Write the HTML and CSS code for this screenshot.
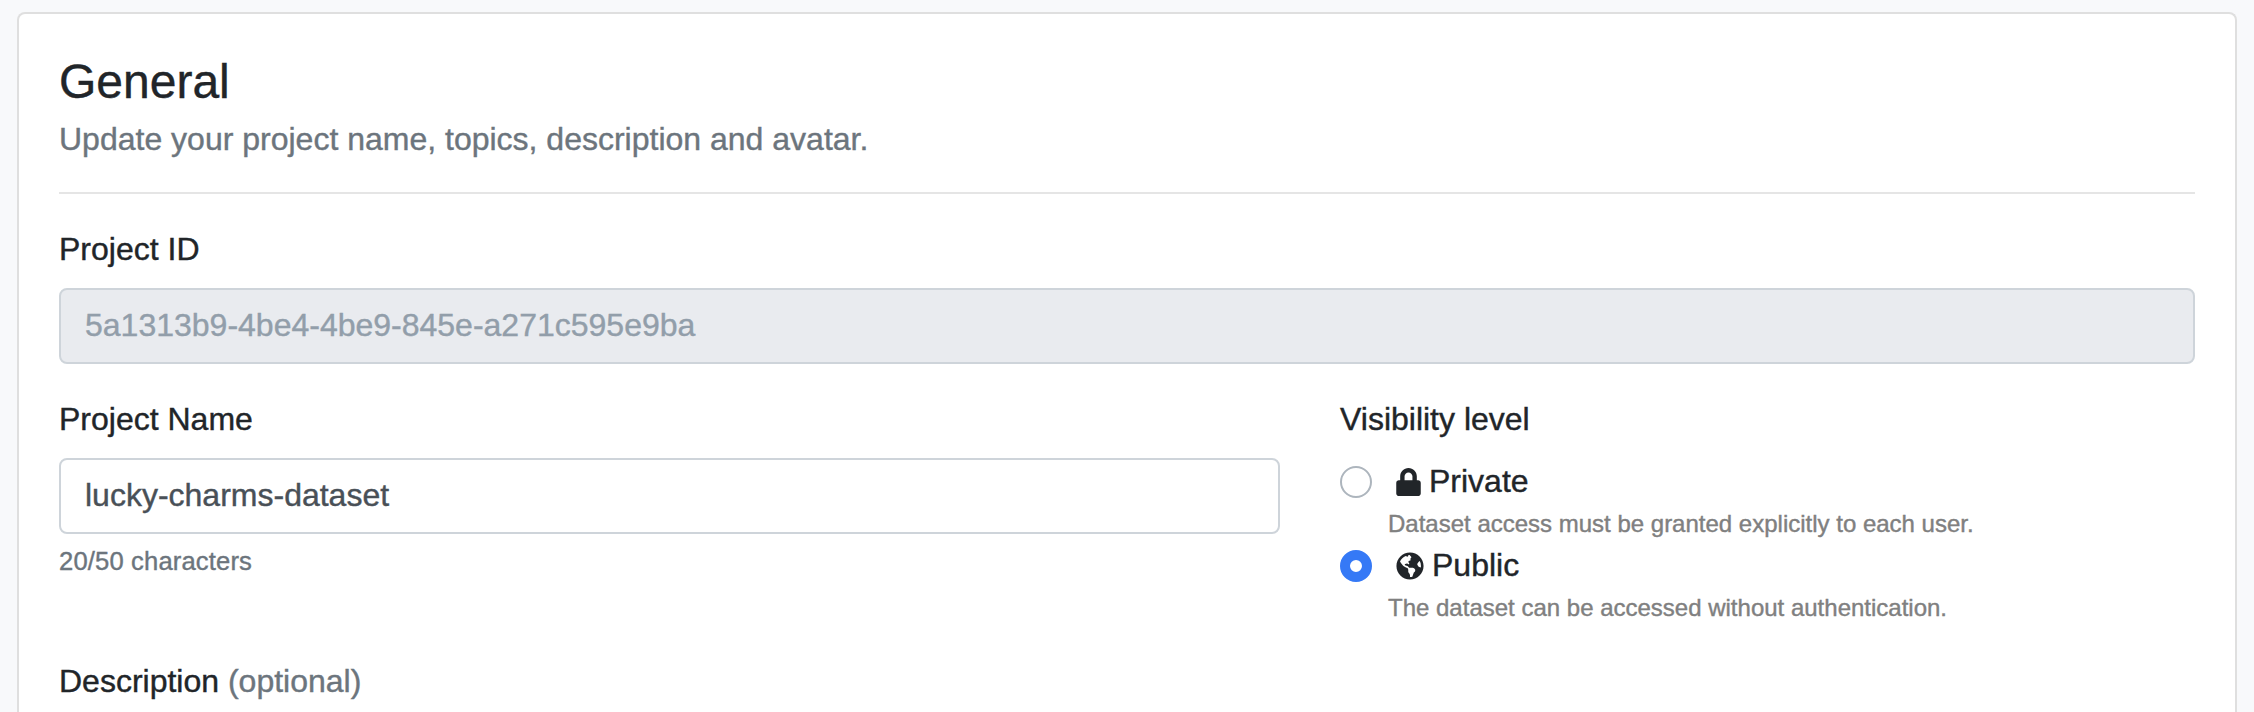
FILE: index.html
```
<!DOCTYPE html>
<html lang="en">
<head>
<meta charset="utf-8">
<title>General settings</title>
<link rel="stylesheet" href="styles.css">
</head>
<body>
<main class="card">
  <header class="card-header">
    <h3 class="title">General</h3>
    <p class="subtitle">Update your project name, topics, description and avatar.</p>
  </header>
  <form class="form">
    <div class="group">
      <label class="label" for="pid">Project ID</label>
      <input class="control" id="pid" type="text" value="5a1313b9-4be4-4be9-845e-a271c595e9ba" disabled>
    </div>
    <div class="row">
      <div class="group name-group">
        <label class="label" for="pname">Project Name</label>
        <input class="control" id="pname" type="text" value="lucky-charms-dataset">
        <small class="help">20/50 characters</small>
      </div>
      <div class="group visibility">
        <span class="label">Visibility level</span>
        <div class="option">
          <input class="radio" type="radio" name="vis" id="private">
          <div class="option-body">
            <label class="option-label" for="private">
              <svg class="icon lock" viewBox="0 0 448 512" aria-hidden="true"><path fill="currentColor" d="M400 224h-24v-72C376 68.2 307.8 0 224 0S72 68.2 72 152v72H48c-26.5 0-48 21.5-48 48v192c0 26.5 21.5 48 48 48h352c26.5 0 48-21.5 48-48V272c0-26.5-21.5-48-48-48zm-104 0H152v-72c0-39.7 32.3-72 72-72s72 32.3 72 72v72z"/></svg>
              <span>Private</span>
            </label>
            <p class="hint">Dataset access must be granted explicitly to each user.</p>
          </div>
        </div>
        <div class="option">
          <input class="radio" type="radio" name="vis" id="public" checked>
          <div class="option-body">
            <label class="option-label" for="public">
              <svg class="icon globe" viewBox="0 0 496 512" aria-hidden="true"><path fill="currentColor" d="M248 8C111.03 8 0 119.03 0 256s111.03 248 248 248 248-111.03 248-248S384.97 8 248 8zm82.29 357.6c-3.9 3.88-7.99 7.95-11.31 11.28-2.99 3-5.1 6.7-6.17 10.71-1.51 5.66-2.73 11.38-4.77 16.87l-17.39 46.85c-13.76 3-28 4.69-42.65 4.69v-27.38c1.69-12.62-7.64-36.26-22.63-51.25-6-6-9.37-14.14-9.37-22.63v-32.01c0-11.64-6.27-22.34-16.46-27.97-14.37-7.95-34.81-19.06-48.81-26.11-11.48-5.78-22.1-13.14-31.65-21.75l-.8-.72a114.792 114.792 0 0 1-18.06-20.74c-9.38-13.77-24.66-36.42-34.59-51.14 20.47-45.5 57.36-82.04 103.2-101.89l24.01 12.01C203.48 89.74 216 82.01 216 70.11v-11.3c7.99-1.29 16.12-2.11 24.39-2.42l28.3 28.3c6.25 6.25 6.25 16.38 0 22.63L264 112l-10.34 10.34c-3.12 3.12-3.12 8.19 0 11.31l4.69 4.69c3.12 3.12 3.12 8.19 0 11.31l-8 8a8.008 8.008 0 0 1-5.66 2.34h-8.99c-2.08 0-4.08.81-5.58 2.27l-9.92 9.65a8.008 8.008 0 0 0-1.58 9.31l15.59 31.19c2.66 5.32-1.21 11.58-7.15 11.58h-5.64c-1.93 0-3.79-.7-5.24-1.96l-9.28-8.06a16.017 16.017 0 0 0-15.55-3.1l-31.17 10.39a11.95 11.95 0 0 0-8.17 11.34c0 4.53 2.56 8.66 6.61 10.69l11.08 5.54c9.41 4.71 19.79 7.16 30.31 7.16s22.59 27.29 32 32h66.75c8.49 0 16.62 3.37 22.63 9.37l13.69 13.69a30.503 30.503 0 0 1 8.93 21.57 46.536 46.536 0 0 1-13.72 32.98zM417 274.25c-5.79-1.45-10.84-5-14.15-9.97l-17.98-26.97a23.97 23.97 0 0 1 0-26.62l19.59-29.38c2.32-3.47 5.5-6.29 9.24-8.15l12.98-6.49C440.2 193.59 448 223.87 448 256c0 8.67-.74 17.16-1.82 25.54L417 274.25z"/></svg>
              <span>Public</span>
            </label>
            <p class="hint">The dataset can be accessed without authentication.</p>
          </div>
        </div>
      </div>
    </div>
    <div class="group">
      <span class="label description-label">Description <span class="muted">(optional)</span></span>
    </div>
  </form>
</main>
</body>
</html>
```

FILE: styles.css
```
* {
  box-sizing: border-box;
}

body {
  margin: 0;
  padding: 12px 17px 0;
  height: 712px;
  background: #f8f9fb;
  color: #212529;
  font-family: "Liberation Sans", Arial, sans-serif;
  font-size: 32px;
  line-height: 48px;
  -webkit-text-stroke: 0.4px;
}

.card {
  height: 700px;
  padding: 40px 40px 0;
  border: 2px solid #dfdfdf;
  border-bottom: 0;
  border-radius: 8px 8px 0 0;
  background: #fff;
}

.card-header {
  height: 140px;
  border-bottom: 2px solid #e5e5e5;
}

.title {
  margin: 0 0 5px;
  font-size: 48px;
  font-weight: 400;
  line-height: 56px;
}

.subtitle {
  margin: 0;
  color: #6c757d;
}

.form {
  padding-top: 31px;
}

.label {
  display: block;
  margin-bottom: 15px;
}

.control {
  display: block;
  width: 100%;
  height: 76px;
  padding: 0 24px 2px;
  border: 2px solid #ced4da;
  border-radius: 8px;
  background: #fff;
  color: #495057;
  font: inherit;
  -webkit-text-stroke: inherit;
}

.control:disabled {
  background: #e9ebef;
  color: #929eaa;
}

.row {
  display: grid;
  grid-template-columns: 1221px 1fr;
  column-gap: 60px;
  height: 262px;
  margin-top: 31px;
}

.help {
  display: block;
  margin-top: 8px;
  color: #6c757d;
  font-size: 25.6px;
  letter-spacing: 0.15px;
  line-height: 38px;
}

.visibility .label {
  margin-bottom: 14px;
}

.option {
  display: flex;
  gap: 16px;
  height: 84px;
}

.radio {
  appearance: none;
  flex: none;
  width: 32px;
  height: 32px;
  margin: 9px 0 0;
  border: 2px solid #adb5bd;
  border-radius: 50%;
  background: #fff;
}

.radio:checked {
  border: 10px solid #3579f6;
}

.option-label {
  display: flex;
  align-items: center;
  gap: 8px;
  padding-left: 8px;
}

.icon {
  flex: none;
  height: 28px;
  margin-top: 2px;
}

.lock {
  width: 25px;
}

.globe {
  width: 28px;
}

.hint {
  margin: 1px 0 0;
  color: #808080;
  font-size: 24px;
  line-height: 36px;
}

.description-label {
  margin-bottom: 0;
}

.muted {
  color: #6c757d;
}
```
